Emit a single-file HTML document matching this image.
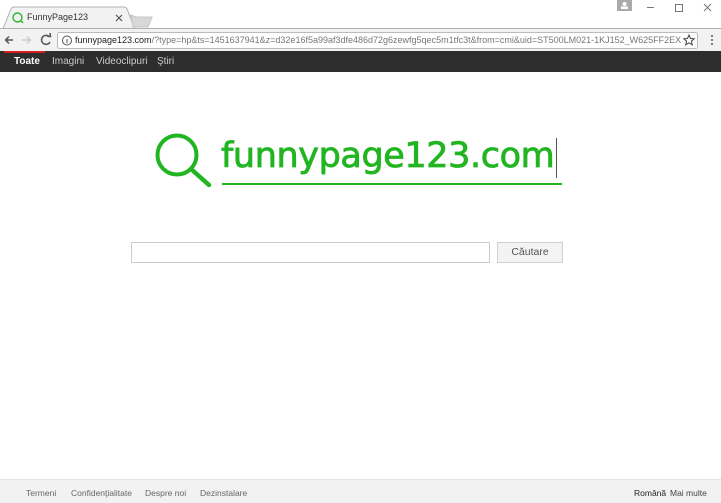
<!DOCTYPE html>
<html><head><meta charset="utf-8"><style>
*{margin:0;padding:0;box-sizing:border-box}
body{width:721px;height:503px;overflow:hidden;background:#fff;font-family:"Liberation Sans",Arial,sans-serif;position:relative}
.abs{position:absolute}
</style></head><body>
<div class="abs" style="left:0;top:0;width:721px;height:29px;background:#fff"></div>
<svg class="abs" style="left:0;top:0" width="721" height="52">
<path d="M3 29 L11 9 Q12 7 14 7 L124 7 Q126 7 127 9 L135 29" fill="#f2f2f2" stroke="#b0b0b0"/>
<path d="M131 15 L136 17 L152 17 L148 27 L133 27 Z" fill="#d8d8d8" stroke="#c4c4c4"/>
<circle cx="17.5" cy="17.5" r="4.5" fill="none" stroke="#2cb52c" stroke-width="1.4"/>
<line x1="20.5" y1="20.5" x2="23" y2="23" stroke="#2cb52c" stroke-width="1.4"/>
<path d="M116 15 l6 6 M122 15 l-6 6" stroke="#555" stroke-width="1.2"/>
<rect x="0" y="28.5" width="721" height="23" fill="#f2f2f2"/>
<line x1="0" y1="28.5" x2="721" y2="28.5" stroke="#b0b0b0"/>
<path d="M13 40 H6 M9 36.5 L5.5 40 L9 43.5" stroke="#555" stroke-width="1.5" fill="none"/>
<path d="M22 40 H30 M27 36.5 L30.5 40 L27 43.5" stroke="#ccc" stroke-width="1.5" fill="none"/>
<path d="M49.5 37 A4.5 4.5 0 1 0 50 42" stroke="#555" stroke-width="1.5" fill="none"/>
<path d="M47 36 L50.5 36.5 L50 33" stroke="#555" stroke-width="1.5" fill="none"/>
<rect x="57.5" y="32.5" width="640" height="16" rx="2" fill="#fff" stroke="#bbb"/>
<circle cx="67" cy="40.5" r="4.5" fill="none" stroke="#555"/>
<line x1="67" y1="39" x2="67" y2="43" stroke="#555"/>
<rect x="617" y="0" width="15" height="11" fill="#aaa"/>
<circle cx="624.5" cy="4" r="2" fill="#fff"/><rect x="621" y="6.5" width="7" height="2.5" fill="#fff"/>
<line x1="647" y1="7.5" x2="654" y2="7.5" stroke="#777"/>
<rect x="675.5" y="4.5" width="7" height="7" fill="none" stroke="#777"/>
<path d="M704 4 l7 7 M711 4 l-7 7" stroke="#777"/>
</svg>
<div class="abs" style="left:27px;top:12px;font-size:9px;color:#333">FunnyPage123</div>
<div class="abs" style="left:75px;top:35px;width:606px;overflow:hidden;font-size:9px;color:#777;white-space:nowrap"><span style="color:#222">funnypage123.com</span>/?type=hp&amp;ts=1451637941&amp;z=d32e16f5a99af3dfe486d72g6zewfg5qec5m1tfc3t&amp;from=cmi&amp;uid=ST500LM021-1KJ152_W625FF2EXXXX</div>
<svg class="abs" style="left:680px;top:30px" width="41" height="20">
<path d="M9 5 l1.5 3.5 3.7 .3 -2.8 2.4 .9 3.6 -3.3-2 -3.3 2 .9-3.6 -2.8-2.4 3.7-.3z" fill="none" stroke="#444"/>
<circle cx="32" cy="6" r="1" fill="#555"/><circle cx="32" cy="10" r="1" fill="#555"/><circle cx="32" cy="14" r="1" fill="#555"/>
</svg>
<div class="abs" style="left:0;top:51px;width:721px;height:21px;background:#2d2d2d"></div>
<div class="abs" style="left:4px;top:51px;width:41px;height:2px;background:#d62020"></div>
<div class="abs" style="left:14px;top:56px;font-size:10px;color:#fff;font-weight:bold">Toate</div>
<div class="abs" style="left:52px;top:56px;font-size:10px;color:#ccc">Imagini</div>
<div class="abs" style="left:96px;top:56px;font-size:10px;color:#ccc">Videoclipuri</div>
<div class="abs" style="left:157px;top:56px;font-size:10px;color:#ccc">Ştiri</div>
<svg class="abs" style="left:150px;top:128px" width="70" height="62">
<circle cx="27" cy="27" r="19.5" fill="none" stroke="#22b522" stroke-width="4"/>
<line x1="41" y1="41" x2="59" y2="57" stroke="#22b522" stroke-width="4.5" stroke-linecap="round"/>
</svg>
<div class="abs" style="left:221px;top:136px;font-family:'DejaVu Sans',sans-serif;font-size:35px;color:#22b522;letter-spacing:-0.4px;-webkit-text-stroke:0.8px #22b522;white-space:nowrap">funnypage123.com</div>
<div class="abs" style="left:556px;top:138px;width:1px;height:40px;background:#555"></div>
<div class="abs" style="left:222px;top:183px;width:340px;height:2px;background:#22b522"></div>
<div class="abs" style="left:131px;top:242px;width:359px;height:21px;border:1px solid #ccc;background:#fff"></div>
<div class="abs" style="left:497px;top:242px;width:66px;height:21px;border:1px solid #d0d0d0;background:#f3f3f3;font-size:10.5px;color:#555;text-align:center;line-height:19px">Căutare</div>
<div class="abs" style="left:0;top:479px;width:721px;height:24px;background:#f2f2f2;border-top:1px solid #e4e4e4"></div>
<div class="abs" style="left:26px;top:488px;font-size:8.5px;color:#666;white-space:nowrap">Termeni</div>
<div class="abs" style="left:71px;top:488px;font-size:8.5px;color:#666;white-space:nowrap">Confidenţialitate</div>
<div class="abs" style="left:145px;top:488px;font-size:8.5px;color:#666;white-space:nowrap">Despre noi</div>
<div class="abs" style="left:200px;top:488px;font-size:8.5px;color:#666;white-space:nowrap">Dezinstalare</div>
<div class="abs" style="left:634px;top:488px;font-size:8.5px;color:#222;white-space:nowrap">Română</div>
<div class="abs" style="left:670px;top:488px;font-size:8.5px;color:#444;white-space:nowrap">Mai multe</div>
</body></html>
